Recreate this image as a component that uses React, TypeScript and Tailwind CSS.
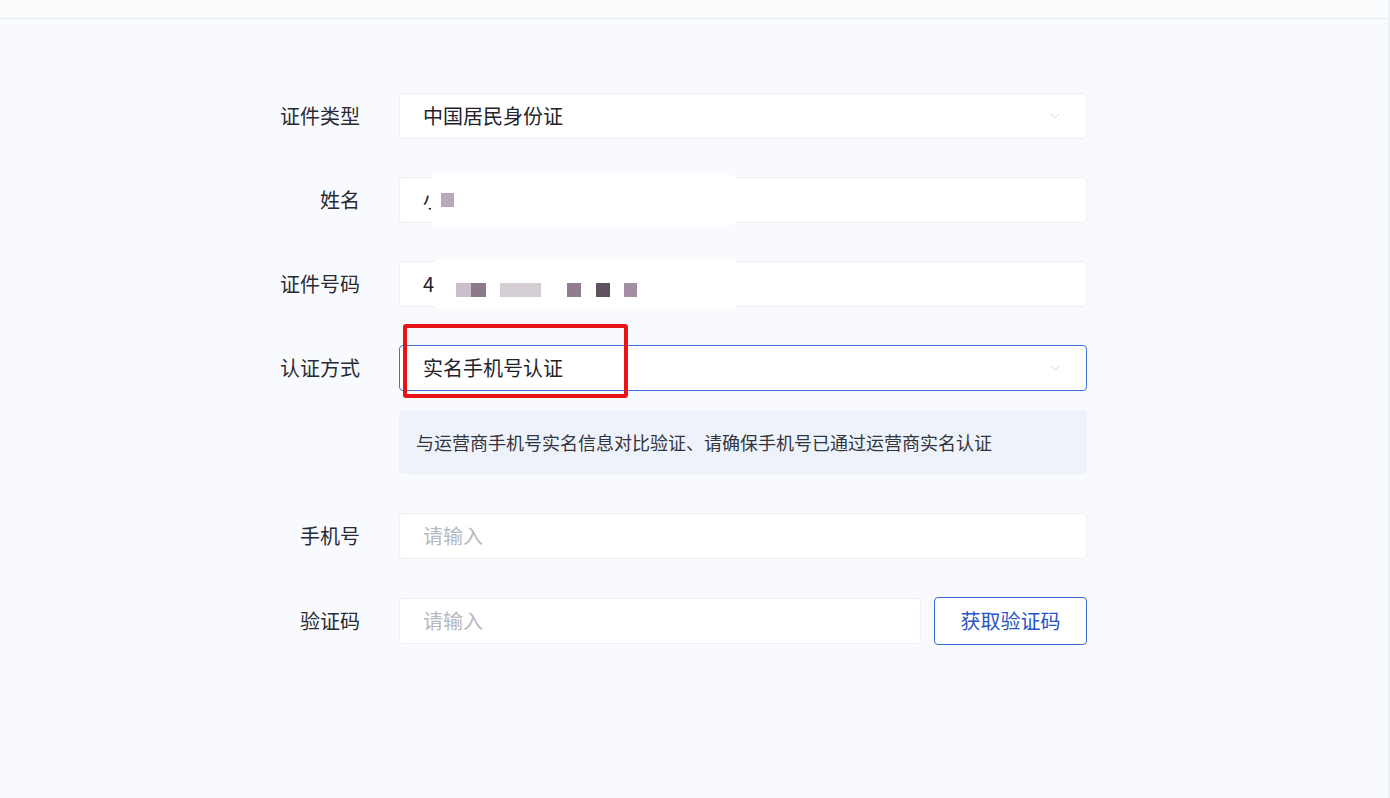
import React from 'react';
import { ChevronDown } from 'lucide-react';

const font = { fontFamily: '"Noto Sans CJK SC", "Noto Sans", sans-serif' };

function Label({ children }: { children: React.ReactNode }) {
  return <div className="w-[100px] shrink-0 text-right text-[20px] text-[#2a2a33]">{children}</div>;
}

function Field({ children, focused = false, className = '' }: { children: React.ReactNode; focused?: boolean; className?: string }) {
  return (
    <div
      className={`h-[46px] flex items-center px-[23px] rounded-[4px] bg-white border ${
        focused ? 'border-[#3f6fd8]' : 'border-[#eceff4]'
      } ${className}`}
    >
      {children}
    </div>
  );
}

function Mosaic({ color, w = 14 }: { color: string; w?: number }) {
  return <span className="inline-block h-[14px] shrink-0" style={{ width: w, backgroundColor: color }} />;
}

export default function App() {
  return (
    <div className="min-h-[798px] w-full bg-[#f8fafd] border-r-2 border-[#eef1f6]" style={font}>
      {/* top strip */}
      <div className="h-[19px] border-b border-[#e7ebf1] bg-[#f9fbfd]" />

      <div className="pl-[260px] pt-[74px] flex flex-col">
        {/* 证件类型 */}
        <div className="flex items-center gap-[39px]">
          <Label>证件类型</Label>
          <Field className="w-[688px] justify-between">
            <span className="text-[20px] text-[#23232b]">中国居民身份证</span>
            <ChevronDown className="w-4 h-4 text-[#d3d7de]" strokeWidth={1.5} />
          </Field>
        </div>

        {/* 姓名 */}
        <div className="flex items-center gap-[39px] mt-[38px]">
          <Label>姓名</Label>
          <div className="relative">
            <Field className="w-[688px]">
              <span className="text-[20px] text-[#23232b]">小</span>
            </Field>
            {/* mosaic cover */}
            <div className="absolute left-[32px] top-[-2px] w-[304px] h-[50px] bg-white flex items-center pl-[10px]">
              <Mosaic color="#b9a8bb" w={13} />
            </div>
          </div>
        </div>

        {/* 证件号码 */}
        <div className="flex items-center gap-[39px] mt-[38px]">
          <Label>证件号码</Label>
          <div className="relative">
            <Field className="w-[688px]">
              <span className="text-[20px] text-[#23232b]">4</span>
            </Field>
            <div className="absolute left-[36px] top-[-2px] w-[300px] h-[50px] bg-white flex items-center pt-[12px] pl-[21px]">
              <Mosaic color="#cbbfcc" w={15} />
              <Mosaic color="#8c7a8c" w={15} />
              <span className="w-[14px] shrink-0" />
              <Mosaic color="#d4cdd4" w={41} />
              <span className="w-[26px] shrink-0" />
              <Mosaic color="#8f7c8f" w={14} />
              <span className="w-[15px] shrink-0" />
              <Mosaic color="#5f5360" w={14} />
              <span className="w-[14px] shrink-0" />
              <Mosaic color="#a48ea4" w={13} />
            </div>
          </div>
        </div>

        {/* 认证方式 */}
        <div className="flex items-center gap-[39px] mt-[38px]">
          <Label>认证方式</Label>
          <div className="relative">
            <Field focused className="w-[688px] justify-between">
              <span className="text-[20px] text-[#23232b]">实名手机号认证</span>
              <ChevronDown className="w-4 h-4 text-[#d3d7de]" strokeWidth={1.5} />
            </Field>
            {/* highlight box */}
            <div className="absolute left-[4px] top-[-21px] w-[225px] h-[74px] border-[4px] border-[#e8141a] rounded-[3px]" />
          </div>
        </div>

        {/* info */}
        <div className="ml-[139px] mt-[19px] w-[688px] h-[64px] rounded-[4px] bg-[#eef3fb] flex items-center px-[17px]">
          <span className="text-[18px] text-[#33343c]">与运营商手机号实名信息对比验证、请确保手机号已通过运营商实名认证</span>
        </div>

        {/* 手机号 */}
        <div className="flex items-center gap-[39px] mt-[39px]">
          <Label>手机号</Label>
          <Field className="w-[688px]">
            <span className="text-[20px] text-[#b5b9c1]">请输入</span>
          </Field>
        </div>

        {/* 验证码 */}
        <div className="flex items-center gap-[39px] mt-[38px]">
          <Label>验证码</Label>
          <div className="flex items-center gap-[13px]">
            <Field className="w-[522px]">
              <span className="text-[20px] text-[#b5b9c1]">请输入</span>
            </Field>
            <button
              type="button"
              className="w-[153px] h-[48px] rounded-[4px] border-[1.5px] border-[#3d6bd6] bg-white text-[20px] text-[#2a55c4]"
            >
              获取验证码
            </button>
          </div>
        </div>
      </div>
    </div>
  );
}
